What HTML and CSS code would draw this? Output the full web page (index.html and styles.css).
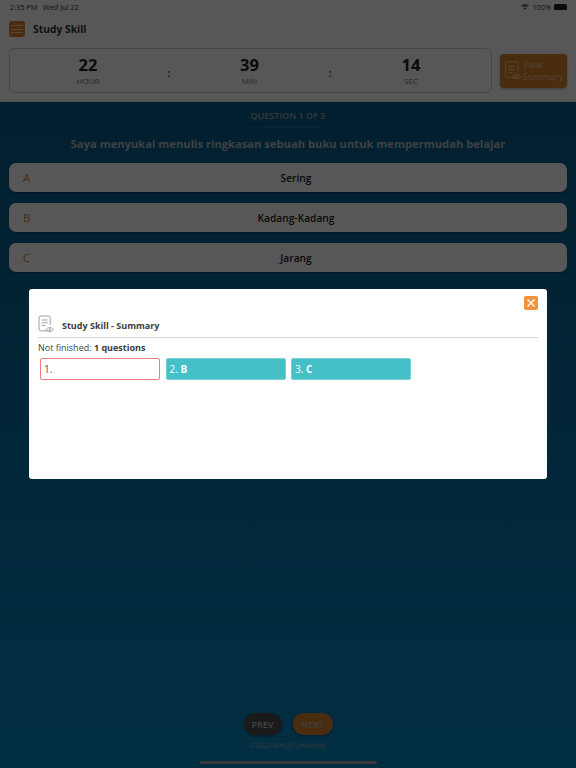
FILE: index.html
```html
<!DOCTYPE html>
<html lang="id">
<head>
<meta charset="utf-8">
<title>Study Skill</title>
<link rel="stylesheet" href="styles.css">
</head>
<body>
<div class="page">
  <header class="top">
    <div class="status">
      <span>2:35 PM&nbsp;&nbsp; Wed Jul 22</span>
      <span class="status-right">
        <svg class="wifi" viewBox="0 0 16 12" aria-hidden="true"><path d="M8 11.5 5.6 8.8a3.4 3.4 0 0 1 4.8 0z M3.9 7.1 2.6 5.7a7.6 7.6 0 0 1 10.8 0l-1.3 1.4a5.8 5.8 0 0 0-8.2 0z M1.5 4.7.3 3.3a11 11 0 0 1 15.4 0l-1.2 1.4a9.2 9.2 0 0 0-13 0z"/></svg>
        100%
        <span class="battery"></span>
      </span>
    </div>
    <div class="title-row">
      <span class="menu"><i></i><i></i><i></i></span>
      <span class="title">Study Skill</span>
    </div>
    <div class="timer-row">
      <div class="timer">
        <div class="unit"><b>22</b><span>HOUR</span></div>
        <div class="colon">:</div>
        <div class="unit"><b>39</b><span>MIN</span></div>
        <div class="colon">:</div>
        <div class="unit"><b>14</b><span>SEC</span></div>
      </div>
      <div class="summary-btn">
        <svg class="doc" viewBox="0 0 20 22" aria-hidden="true"><path d="M13 19H4a2.4 2.4 0 0 1-2.4-2.4V3.4A2.4 2.4 0 0 1 4 1h10a2.4 2.4 0 0 1 2.4 2.4V12M5 6h8M5 9.500h8M5 13h5"/><path d="M10 18c2.500-3.600 7-3.600 9.500 0-2.500 3.600-7 3.600-9.500 0z"/><circle cx="14.700" cy="18" r="1.200"/></svg>
        <span>View Summary</span>
      </div>
    </div>
  </header>
  <main class="content">
    <div class="q-num"><span>QUESTION 1 OF 3</span></div>
    <h1 class="question">Saya menyukai menulis ringkasan sebuah buku untuk mempermudah belajar</h1>
    <div class="options">
      <div class="option"><span class="letter">A</span><span class="text">Sering</span></div>
      <div class="option"><span class="letter">B</span><span class="text">Kadang-Kadang</span></div>
      <div class="option"><span class="letter">C</span><span class="text">Jarang</span></div>
    </div>
    <div class="nav">
      <span class="pill prev">PREV</span>
      <span class="pill next">NEXT</span>
    </div>
    <div class="copy">©2020 BINUS University</div>
    <div class="home-bar"></div>
  </main>
</div>
<div class="overlay"></div>
<section class="modal">
  <div class="close">
    <svg viewBox="0 0 10 10" aria-hidden="true"><path d="M1.500 1.500l7 7M8.500 1.500l-7 7"/></svg>
  </div>
  <div class="modal-head">
    <svg class="doc-grey" viewBox="0 0 20 22" aria-hidden="true"><path d="M12 19.500H3.500A2.200 2.200 0 0 1 1.300 17.300V3.200A2.200 2.200 0 0 1 3.500 1h9.500a2.200 2.200 0 0 1 2.200 2.200V12M4.500 6h7.500M4.500 9.500h7.500M4.500 13h5"/><path d="M10 18c2.500-3.400 6.800-3.400 9.300 0-2.500 3.400-6.800 3.400-9.300 0z"/><circle cx="14.600" cy="18" r="1.100"/></svg>
    <span>Study Skill - Summary</span>
  </div>
  <p class="not-finished">Not finished: <b>1 questions</b></p>
  <div class="answers">
    <div class="answer empty">1.</div>
    <div class="answer">2. <b>B</b></div>
    <div class="answer">3. <b>C</b></div>
  </div>
</section>
</body>
</html>
```
FILE: styles.css
```css
* { box-sizing: border-box; }
html, body { margin: 0; height: 100%; }
body { font-family: "Open Sans", sans-serif; width: 576px; height: 768px; overflow: hidden; position: relative; }
.page { height: 768px; display: flex; flex-direction: column; }

.top { height: 102px; background: #fff; flex: none; border-bottom: 1px solid #eee; }
.status { height: 14px; padding: 0 9px 0 10px; display: flex; justify-content: space-between; align-items: center; font-size: 7.300px; color: #333; }
.status-right { display: flex; align-items: center; gap: 2px; }
.wifi { width: 8px; height: 6px; fill: #333; margin-right: 1px; }
.battery { width: 13px; height: 6px; background: #222; border-radius: 1.500px; margin-left: 1px; }

.title-row { height: 30px; padding: 0 9px; display: flex; align-items: center; gap: 8px; }
.menu { width: 16px; height: 16px; background: #d9822b; border-radius: 3px; display: flex; flex-direction: column; justify-content: center; gap: 2.500px; padding: 0 2px; }
.menu i { display: block; height: 1px; background: #f5d0a8; }
.title { font-size: 10.300px; font-weight: 700; color: #333; }

.timer-row { display: flex; align-items: center; padding: 4px 9px 0; gap: 8px; }
.timer { width: 483px; height: 45px; border: 1px solid #ccc; border-radius: 6px; display: flex; justify-content: space-between; align-items: center; padding: 0 68px 0 66px; }
.unit { display: flex; flex-direction: column; align-items: center; width: 24px; margin-top: -1px; }
.unit b { font-size: 16.500px; line-height: 20px; color: #222; }
.unit span { font-size: 8px; line-height: 11px; color: #777; }
.colon { font-size: 10px; font-weight: 700; color: #555; margin-top: 4px; }
.summary-btn { width: 67px; height: 34px; background: #d9822b; border-radius: 4px; display: flex; align-items: center; padding: 0 3px 0 4px; gap: 2px; box-shadow: 0 1px 3px rgba(0,0,0,.3); }
.summary-btn span { font-size: 9px; line-height: 12px; color: #eec49a; }
.doc { width: 17px; height: 19px; flex: none; fill: none; stroke: #eec49a; stroke-width: 1.200; }

.content { flex: 1; background: linear-gradient(#065b89, #0888c4); display: flex; flex-direction: column; align-items: center; padding: 8px 9px 0; }
.q-num { height: 18px; }
.q-num span { width: 76px; white-space: nowrap; font-size: 9px; line-height: 12px; font-weight: 600; color: #9aa8b0; border-bottom: 1px solid #0f6d9a; height: 18px; display: flex; justify-content: center; }
.question { margin: 8px 0 0; font-size: 11.200px; line-height: 16px; font-weight: 700; color: #b5bfc5; white-space: nowrap; }
.options { width: 100%; display: flex; flex-direction: column; gap: 11px; margin-top: 11px; }
.option { height: 29px; background: #fff; border-radius: 7px; position: relative; display: flex; align-items: center; justify-content: center; padding-left: 16px; box-shadow: 0 1px 2px rgba(0,0,0,.4); }
.letter { position: absolute; left: 14px; font-size: 11.500px; color: #e08428; }
.text { font-size: 10.200px; font-weight: 600; color: #222; }
.nav { margin-top: auto; display: flex; gap: 11px; }
.pill { height: 22px; border-radius: 11px; display: flex; align-items: center; justify-content: center; font-size: 9px; font-weight: 600; box-shadow: 0 1px 3px rgba(0,0,0,.3); }
.prev { background: #4c4c4c; color: #c0c0c0; width: 38px; }
.next { background: #d9822b; color: #b8b8b8; width: 40px; }
.copy { margin-top: 6px; font-size: 6.800px; line-height: 10px; color: #a0a8ac; }
.home-bar { width: 177px; height: 3px; background: #a9a9a9; border-radius: 2px; margin: 10px 0 4px; }

.overlay { position: absolute; inset: 0; background: rgba(0,0,0,.66); }

.modal { position: absolute; left: 29px; top: 289px; width: 518px; height: 190px; background: #fff; border-radius: 3px; padding: 0 9px; }
.close { position: absolute; right: 9px; top: 7px; width: 14px; height: 14px; background: #f5913a; border-radius: 2px; display: flex; align-items: center; justify-content: center; }
.close svg { width: 10px; height: 10px; fill: none; stroke: #fff; stroke-width: 1.400; }
.modal-head { margin-top: 25px; height: 24px; border-bottom: 1px solid #d5d5d5; display: flex; align-items: flex-end; gap: 8px; padding-bottom: 5px; font-size: 9px; font-weight: 700; color: #3c3c3c; }
.doc-grey { width: 16px; height: 18px; fill: none; stroke: #888; stroke-width: 1; margin-bottom: -1px; }
.not-finished { margin: 4px 0 0; font-size: 9px; line-height: 12px; color: #444; }
.not-finished b { color: #3c3c3c; }
.answers { display: flex; gap: 5.500px; margin: 4px 0 0 2px; }
.answer { width: 120px; height: 22px; border-radius: 2px; background: #45c0c6; color: #fff; font-size: 10px; line-height: 20px; padding-left: 3px; border: 1px solid #76d2d7; }
.answer.empty { background: #fff; border-color: #ea7d7d; color: #555; }
```
